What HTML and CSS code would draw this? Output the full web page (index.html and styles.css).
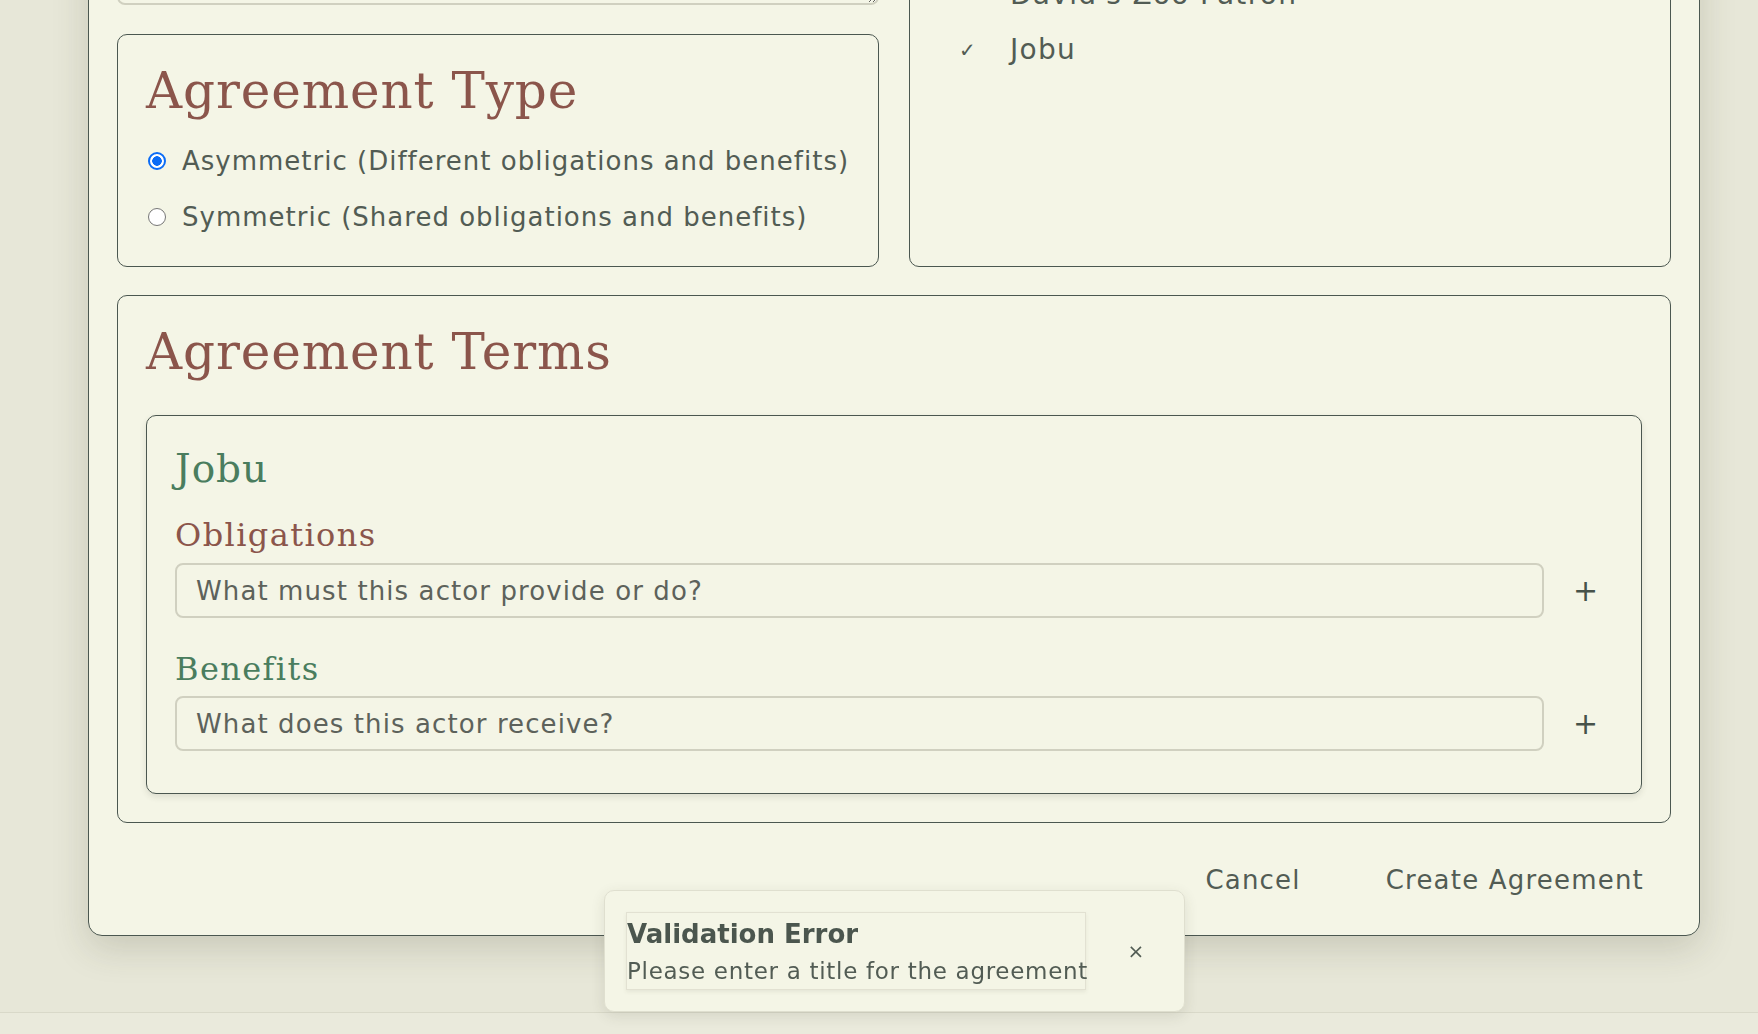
FILE: index.html
```html
<!DOCTYPE html>
<html lang="en">
<head>
<meta charset="utf-8">
<title>Create Agreement</title>
<link rel="stylesheet" href="styles.css">
</head>
<body>
<div class="app">
  <main class="stage">
    <section class="modal">
      <h2 class="modal-title">New Agreement</h2>
      <div class="top-grid">
        <div class="left-col">
          <div class="field">
            <label class="field-label">Title</label>
            <input class="text-input" type="text" placeholder="Agreement title">
          </div>
          <div class="field">
            <label class="field-label">Description</label>
            <textarea class="text-area" placeholder="Describe the agreement"></textarea>
          </div>
          <div class="panel type-panel">
            <h3 class="panel-title">Agreement Type</h3>
            <label class="radio-row"><input type="radio" name="type" checked><span>Asymmetric (Different obligations and benefits)</span></label>
            <label class="radio-row"><input type="radio" name="type"><span>Symmetric (Shared obligations and benefits)</span></label>
          </div>
        </div>
        <div class="panel actors-panel">
          <h3 class="panel-title">Participants</h3>
          <ul class="actor-list">
            <li class="actor-row"><span class="check"></span><span>Alice's Garden</span></li>
            <li class="actor-row"><span class="check"></span><span>Bob the Baker</span></li>
            <li class="actor-row"><span class="check"></span><span>Community Library</span></li>
            <li class="actor-row"><span class="check"></span><span>David's Zoo Patron</span></li>
            <li class="actor-row"><span class="check">✓</span><span>Jobu</span></li>
          </ul>
        </div>
      </div>

      <div class="panel terms-panel">
        <h3 class="panel-title">Agreement Terms</h3>
        <div class="actor-card">
          <h4 class="actor-name">Jobu</h4>
          <h5 class="term-label obligations">Obligations</h5>
          <div class="term-row">
            <input class="text-input" type="text" placeholder="What must this actor provide or do?">
            <button class="add-btn" type="button">+</button>
          </div>
          <h5 class="term-label benefits">Benefits</h5>
          <div class="term-row">
            <input class="text-input" type="text" placeholder="What does this actor receive?">
            <button class="add-btn" type="button">+</button>
          </div>
        </div>
      </div>

      <div class="modal-actions">
        <button class="text-btn" type="button">Cancel</button>
        <button class="text-btn" type="button">Create Agreement</button>
      </div>
    </section>
  </main>
  <footer class="status-bar"></footer>
</div>

<div class="toast">
  <div class="toast-body">
    <div class="toast-title">Validation Error</div>
    <div class="toast-msg">Please enter a title for the agreement</div>
  </div>
  <button class="toast-close" type="button">×</button>
</div>
</body>
</html>
```

FILE: styles.css
```css
* { box-sizing: border-box; }

html, body {
  margin: 0;
  height: 100%;
}

body {
  background: #e7e7d8;
  font-family: "DejaVu Sans", "Noto Sans", sans-serif;
  color: #525c54;
  overflow: hidden;
}

.app {
  height: 100vh;
  display: flex;
  flex-direction: column;
}

.stage {
  flex: 1;
  overflow: hidden;
  background: #e7e7d8;
}

.status-bar {
  height: 22px;
  border-top: 1px solid #d9d9c9;
  background: #eaeadc;
}

.modal {
  width: 1612px;
  margin: -419px 0 0 88px;
  background: #f4f5e6;
  border: 1px solid #4b5750;
  border-radius: 14px;
  padding: 29px 28px 23px;
  box-shadow: 0 12px 36px rgba(60, 60, 40, 0.18);
}

.modal-title {
  margin: 0 0 24px;
  font-family: "DejaVu Serif", serif;
  font-weight: normal;
  font-size: 50px;
  line-height: 60px;
  color: #8b554b;
}

.top-grid {
  display: grid;
  grid-template-columns: 1fr 1fr;
  column-gap: 30px;
}

.left-col {
  display: flex;
  flex-direction: column;
  gap: 29px;
}

.field {
  display: flex;
  flex-direction: column;
  gap: 8px;
}

.field-label {
  font-size: 24px;
  line-height: 30px;
}

.text-input,
.text-area {
  font-family: "DejaVu Sans", "Noto Sans", sans-serif;
  font-size: 26px;
  letter-spacing: 1.1px;
  color: #525c54;
  background: #f4f5e6;
  border: 2px solid #d0d0c0;
  border-radius: 8px;
  padding: 0 19px;
  outline: none;
}

.text-input {
  height: 55px;
}

.text-input::placeholder,
.text-area::placeholder {
  color: #5d625b;
}

.text-area {
  height: 150px;
  padding-top: 12px;
  resize: vertical;
}

.panel {
  border: 1px solid #4b5750;
  border-radius: 10px;
  background: #f4f5e6;
  padding: 26px 28px 28px;
}

.panel-title {
  margin: 0;
  font-family: "DejaVu Serif", serif;
  font-weight: normal;
  font-size: 50px;
  line-height: 60px;
  letter-spacing: 0.9px;
  color: #8b554b;
}

.type-panel {
  padding-bottom: 31px;
}

.type-panel .panel-title {
  margin-bottom: 22px;
}

.radio-row {
  display: flex;
  align-items: center;
  gap: 16px;
  font-size: 26px;
  letter-spacing: 1px;
  line-height: 36px;
  padding-left: 2px;
}

.radio-row + .radio-row {
  margin-top: 20px;
}

.radio-row input {
  appearance: none;
  -webkit-appearance: none;
  flex: none;
  width: 18px;
  height: 18px;
  margin: 0;
  border: 1.5px solid #767676;
  border-radius: 50%;
  background: #ffffff;
}

.radio-row input:checked {
  border: 2px solid #0b6cf6;
  background: radial-gradient(circle, #0b6cf6 0 4.5px, #ffffff 5px);
}

.actors-panel .panel-title {
  margin-bottom: 20px;
}

.actor-list {
  list-style: none;
  margin: 0;
  padding: 0;
}

.actor-row {
  display: flex;
  align-items: center;
  height: 55px;
  padding-left: 21px;
  font-size: 28px;
  letter-spacing: 1.3px;
}

.check {
  width: 51px;
  font-size: 20px;
}

.terms-panel {
  margin-top: 28px;
  padding-bottom: 28px;
}

.terms-panel > .panel-title {
  margin-bottom: 33px;
}

.actor-card {
  border: 1px solid #4b5750;
  border-radius: 10px;
  padding: 30px 28px 42px 28px;
  box-shadow: 0 3px 6px rgba(60, 60, 40, 0.12);
}

.actor-name {
  margin: 0 0 25px;
  font-family: "DejaVu Serif", serif;
  font-weight: normal;
  font-size: 39px;
  line-height: 45px;
  letter-spacing: 1px;
  color: #4a7d5e;
}

.term-label {
  margin: 0 0 9px;
  font-family: "DejaVu Serif", serif;
  font-weight: normal;
  font-size: 32px;
  line-height: 38px;
  letter-spacing: 1.4px;
}

.term-label.obligations { color: #8b554b; }
.term-label.benefits { color: #4a7d5e; margin-top: 32px; margin-bottom: 8px; }

.term-row {
  display: flex;
  align-items: center;
  gap: 14px;
}

.term-row .text-input {
  flex: 1;
}

.add-btn {
  width: 55px;
  height: 55px;
  border: none;
  background: transparent;
  font-family: "DejaVu Sans", sans-serif;
  font-size: 30px;
  color: #46524a;
  padding: 0;
  cursor: pointer;
}

.modal-actions {
  display: flex;
  justify-content: flex-end;
  gap: 29px;
  margin-top: 25px;
}

.text-btn {
  border: none;
  background: transparent;
  font-family: "DejaVu Sans", "Noto Sans", sans-serif;
  font-size: 26px;
  letter-spacing: 1.2px;
  line-height: 36px;
  color: #525c54;
  padding: 14px 28px;
  cursor: pointer;
}

.text-btn:last-child {
  padding-right: 27px;
}

.toast {
  position: fixed;
  left: 604px;
  top: 890px;
  width: 581px;
  height: 122px;
  display: flex;
  align-items: center;
  gap: 34px;
  padding: 20px 32px 20px 21px;
  background: #f4f5e6;
  border: 1px solid #dfdfcf;
  border-radius: 10px;
  box-shadow: 0 4px 14px rgba(60, 60, 40, 0.12);
}

.toast-body {
  flex: none;
  width: 460px;
  height: 78px;
  border: 1px solid #e2e1d2;
  box-shadow: 0 2px 4px rgba(60, 60, 40, 0.08);
  padding-top: 1px;
  white-space: nowrap;
}

.toast-title {
  font-weight: bold;
  font-size: 26px;
  line-height: 40px;
  color: #4b564e;
}

.toast-msg {
  font-size: 23px;
  letter-spacing: 0.7px;
  line-height: 34px;
}

.toast-close {
  width: 32px;
  border: none;
  background: transparent;
  font-family: "DejaVu Sans", sans-serif;
  font-size: 20px;
  color: #525c54;
  padding: 0;
}
```
